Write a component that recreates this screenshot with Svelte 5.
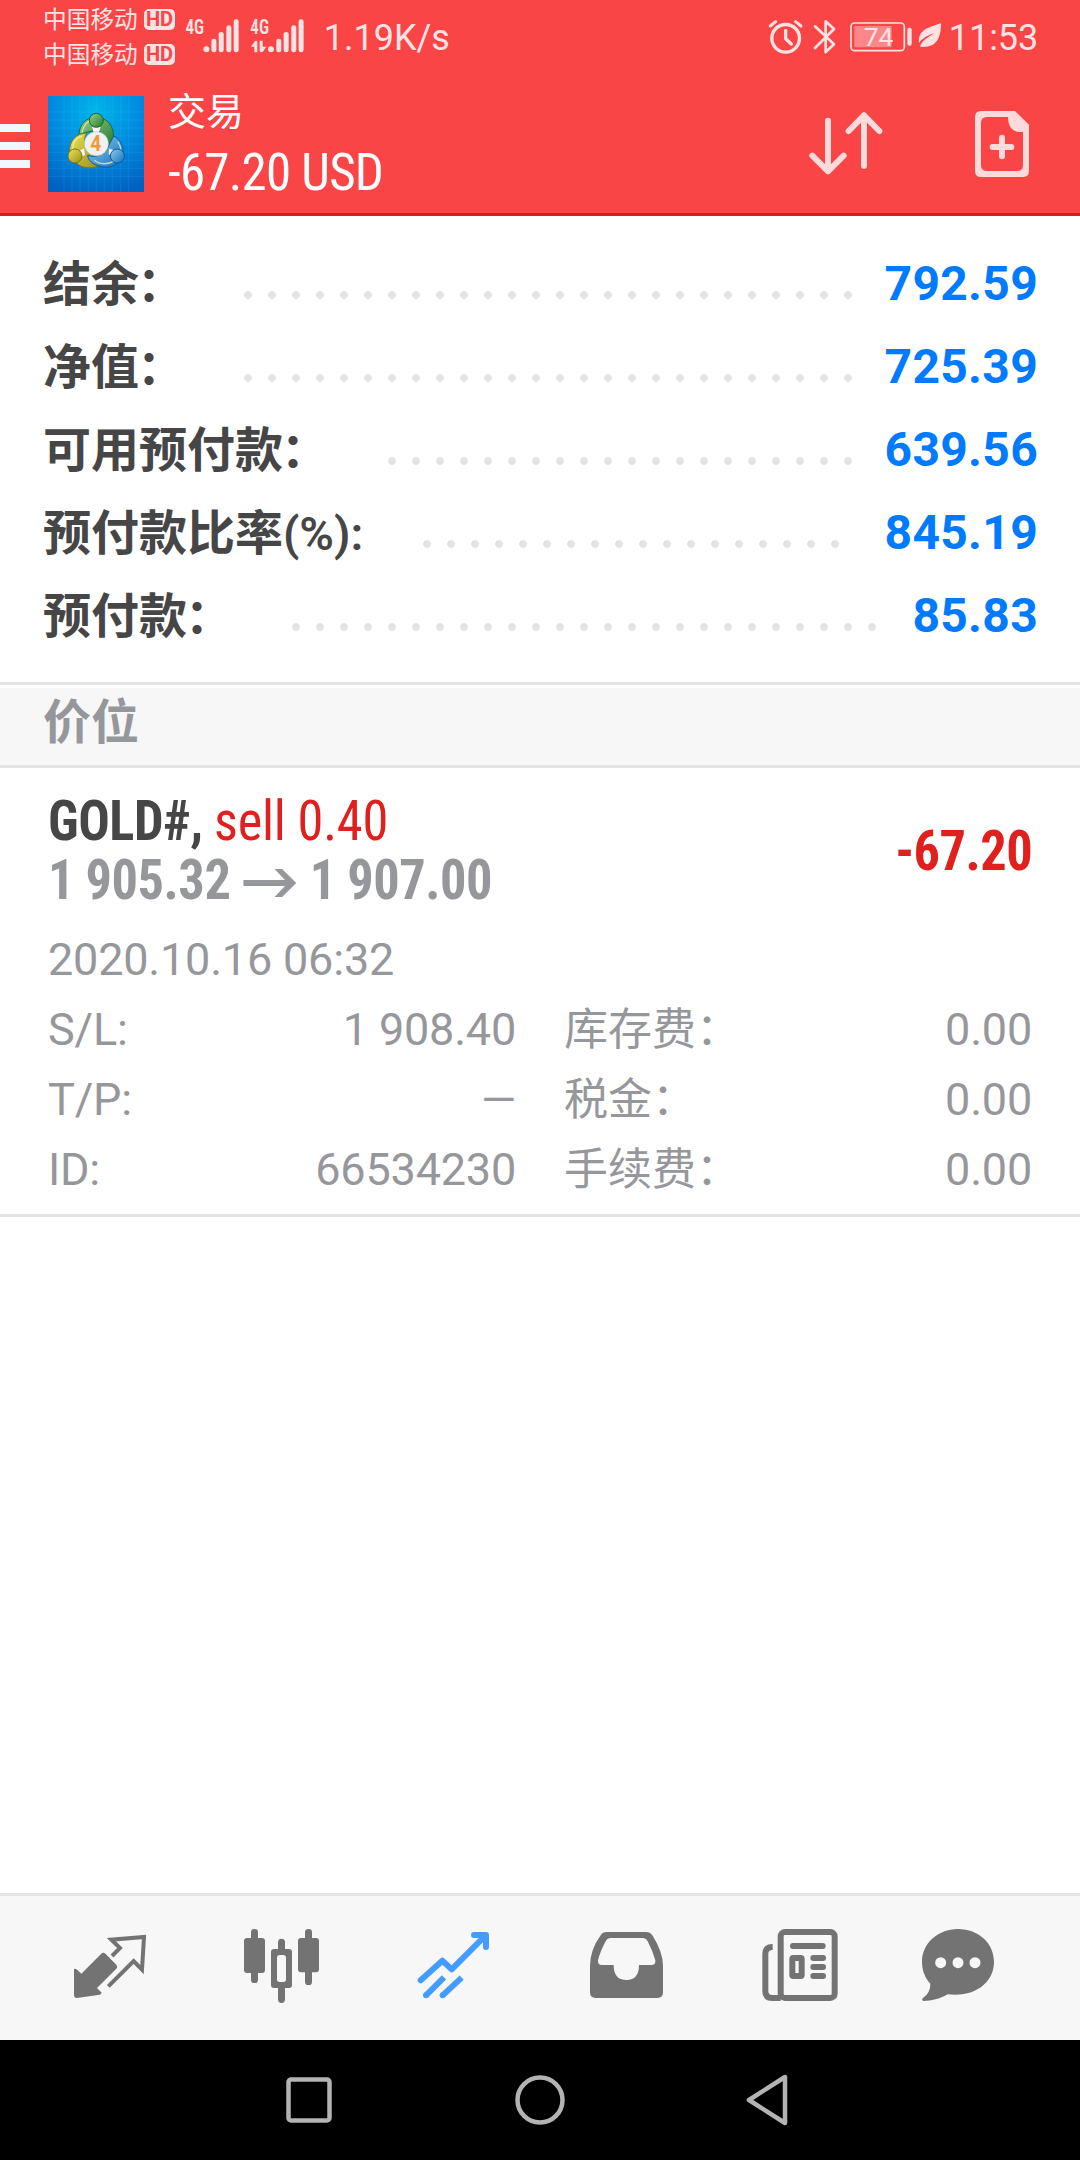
<script>
  const summary = [
    { label: '结余', value: '792.59', dots: 26, gap: 25 },
    { label: '净值', value: '725.39', dots: 26, gap: 25 },
    { label: '可用预付款', value: '639.56', dots: 20, gap: 25 },
    { label: '预付款比率', suffix: '(%):', value: '845.19', dots: 18, gap: 38 },
    { label: '预付款', value: '85.83', dots: 25, gap: 28 }
  ];

  const details = [
    { k1: 'S/L:', v1: '1 908.40', k2: '库存费：', v2: '0.00' },
    { k1: 'T/P:', v1: '—', k2: '税金：', v2: '0.00' },
    { k1: 'ID:', v1: '66534230', k2: '手续费：', v2: '0.00' }
  ];
</script>

<div class="screen" lang="zh-CN">
  <header>
    <div class="status">
      <div class="carriers">
        <div class="carrier"><span>中国移动</span><b>HD</b></div>
        <div class="carrier"><span>中国移动</span><b>HD</b></div>
      </div>
      <svg class="signal" viewBox="550 50 380 112" fill="currentColor">
        <text x="557" y="101" font-size="59" font-weight="600" textLength="56" lengthAdjust="spacingAndGlyphs">4G</text>
        <circle cx="620" cy="147" r="9" />
        <rect x="635" y="115" width="15" height="41" rx="7" />
        <rect x="657" y="95" width="15" height="61" rx="7" />
        <rect x="680" y="75" width="15" height="81" rx="7" />
        <rect x="702" y="57" width="15" height="99" rx="7" />
        <text x="752" y="101" font-size="59" font-weight="600" textLength="56" lengthAdjust="spacingAndGlyphs">4G</text>
        <path d="M754 139 L766 122 Q772 120 773 124 V156 H764 V139Z M780 121 H789 V139 H800 L789 155 Q781 158 780 153Z" />
        <circle cx="814" cy="147" r="9" />
        <rect x="830" y="115" width="15" height="41" rx="7" />
        <rect x="852" y="95" width="15" height="61" rx="7" />
        <rect x="875" y="75" width="15" height="81" rx="7" />
        <rect x="897" y="57" width="15" height="99" rx="7" />
      </svg>
      <span class="speed">1.19K/s</span>
      <svg class="tray" viewBox="84 50 528 120" fill="none" stroke="currentColor">
        <circle cx="137" cy="114" r="41.500" stroke-width="10" />
        <path d="M137 90 V115 L154 131" stroke-width="10" stroke-linecap="round" stroke-linejoin="round" />
        <path d="M91 77 L107 64 M183 77 L167 64" stroke-width="9" stroke-linecap="round" />
        <path d="M225 78 L282 132 L257 155 V63 L282 86 L225 143" stroke-width="8" stroke-linecap="round" stroke-linejoin="round" />
        <rect x="333" y="68" width="160" height="83" rx="11" stroke-width="5" />
        <rect x="343" y="77" width="112" height="64" rx="4" fill="currentColor" fill-opacity=".42" stroke="none" />
        <rect x="502" y="82" width="13" height="54" rx="6" fill="currentColor" stroke="none" />
        <text x="371" y="137" font-size="77" textLength="89" lengthAdjust="spacingAndGlyphs" fill="currentColor" stroke="none">74</text>
        <path d="M603 69 C603 115 588 142 546 140 L540 138 C548 119 566 109 584 99 C561 105 545 116 537 128 C533 88 566 81 603 69Z" fill="currentColor" stroke="none" />
      </svg>
      <span class="clock">11:53</span>
    </div>

    <div class="toolbar">
      <div class="burger"><i></i><i></i><i></i></div>
      <svg class="logo" viewBox="144 288 288 288">
        <defs>
          <radialGradient id="sky" cx="50%" cy="15%" r="90%"><stop offset="0" stop-color="#00b5ec" /><stop offset=".5" stop-color="#008be0" /><stop offset="1" stop-color="#0062c0" /></radialGradient>
          <linearGradient id="green" x2="1" y2="1"><stop stop-color="#9bd08b" /><stop offset="1" stop-color="#1f7a2c" /></linearGradient>
          <linearGradient id="yellow" x2="1" y2="1"><stop stop-color="#ece552" /><stop offset="1" stop-color="#998f1c" /></linearGradient>
          <linearGradient id="blue" x2="1" y2="1"><stop stop-color="#8cccf4" /><stop offset="1" stop-color="#1470b4" /></linearGradient>
        </defs>
        <rect x="144" y="288" width="288" height="288" fill="url(#sky)" />
        <path d="M192 288V576M216 288V576M240 288V576M265 288V576M289 288V576M313 288V576M337 288V576M362 288V576M386 288V576M144 336H432M144 360H432M144 384H432M144 408H432M144 432H432M144 457H432M144 481H432M144 505H432M144 529H432" stroke="#5fc7ff" stroke-opacity=".2" stroke-width="2" />
        <path d="M237 404 C237 374 258 352 289 352 C323 352 343 381 340 412 C337 427 328 438 319 441 C323 415 308 392 288 392 C269 392 251 400 237 404Z" fill="url(#green)" stroke="#1b6b36" stroke-width="3" />
        <path d="M209 455 C207 423 228 400 260 399 C248 420 252 451 276 464 C287 479 299 492 294 499 C270 508 237 504 226 484Z" fill="url(#yellow)" stroke="#77751f" stroke-width="3" />
        <path d="M341 408 C363 420 373 440 368 468 C360 493 327 508 300 499 C278 494 264 480 263 466 C287 475 319 463 326 437Z" fill="url(#blue)" stroke="#0b5c9f" stroke-width="3" />
        <path d="M246 397 C250 375 264 362 279 360 M218 446 C219 425 231 412 246 408 M283 481 C299 495 326 494 342 482 M353 425 C361 436 364 446 362 458" fill="none" stroke="#f3f7cf" stroke-opacity=".7" stroke-width="4" />
        <path d="M276 381 H302 L296 400 H282Z M237 454 L252 445 L255 465 L243 470Z M341 450 L327 446 L326 463 L337 470Z" fill="#f4f8f2" />
        <circle cx="289" cy="361" r="21" fill="url(#green)" stroke="#17642e" stroke-width="3" />
        <circle cx="225" cy="468" r="21" fill="url(#yellow)" stroke="#79731d" stroke-width="3" />
        <circle cx="352" cy="468" r="21" fill="url(#blue)" stroke="#0b5c9f" stroke-width="3" />
        <circle cx="289" cy="431" r="36" fill="#f1f1f1" stroke="#cbcbcb" stroke-width="2" />
        <text x="271" y="453" font-size="64" font-weight="700" fill="#f09a35" textLength="33" lengthAdjust="spacingAndGlyphs">4</text>
      </svg>
      <div class="titles">
        <div class="title">交易</div>
        <div class="total">-67.20 USD</div>
      </div>
      <svg class="action" viewBox="180 312 270 240" fill="none" stroke="currentColor" stroke-width="18" stroke-linecap="round" stroke-linejoin="round">
        <path d="M264 362 V514 M217 467 L264 514 L311 467 M372 498 V346 M326 393 L372 346 L418 393" />
      </svg>
      <svg class="action doc" viewBox="660 312 270 240" fill="currentColor">
        <path fill-rule="evenodd" d="M723 333 H825 L867 374 V513 Q867 531 849 531 H723 Q705 531 705 513 V351 Q705 333 723 333Z M741 351 Q723 351 723 369 V495 Q723 513 741 513 H831 Q849 513 849 495 V396 H836 Q804 391 804 351Z" />
        <path d="M786 413 V469 M758 441 H814" stroke="currentColor" stroke-width="18" stroke-linecap="round" />
      </svg>
    </div>
  </header>

  <section class="summary">
    {#each summary as row}
      <div class="line">
        <span class="label">{row.label}{#if row.suffix}<span class="suffix">{row.suffix}</span>{:else}<span class="colon">：</span>{/if}</span>
        <span class="leader" style="width:{row.dots * 24}px;margin-right:{row.gap}px"></span>
        <span class="value">{row.value}</span>
      </div>
    {/each}
  </section>

  <div class="section-title">价位</div>

  <section class="position">
    <div class="head">
      <div>
        <div class="deal"><b>GOLD#,</b><span>sell 0.40</span></div>
        <div class="prices">
          <span>1 905.32</span>
          <svg viewBox="0 0 56 28" fill="none" stroke="currentColor" stroke-width="6"><path d="M0 14 H51" /><path d="M33 0 H41 L56 14 L41 28 H33 L47 14Z" fill="currentColor" stroke="none" /></svg>
          <span>1 907.00</span>
        </div>
      </div>
      <div class="profit">-67.20</div>
    </div>
    <div class="date">2020.10.16 06:32</div>
    {#each details as d}
      <div class="detail">
        <span>{d.k1}</span><span class="num">{d.v1}</span><span class="cjk">{d.k2}</span><span class="num">{d.v2}</span>
      </div>
    {/each}
  </section>

  <nav class="tabs">
    <svg viewBox="66 120 288 288" fill="#737373">
      <path d="M183 222 Q190 215 197 222 L229 254 Q234 260 229 266 L171 324 L185 338 Q184 343 179 344 L111 354 Q102 354 102 345 V267 Q107 265 111 269 L124 281Z" />
      <path d="M216 228 L240 204 L214 179 L312 171 L306 269 L281 243 L205 319" fill="none" stroke="#737373" stroke-width="12" />
    </svg>
    <svg viewBox="582 120 288 288" fill="#737373">
      <rect x="633" y="147" width="21" height="162" rx="10" /><rect x="612" y="174" width="63" height="105" rx="9" />
      <rect x="795" y="147" width="21" height="168" rx="10" /><rect x="774" y="174" width="63" height="103" rx="9" />
      <path d="M714 207 V187 Q714 176 724.500 176 Q735 176 735 187 V207 H747 Q756 207 756 216 V315 Q756 324 747 324 H735 V358 Q735 369 724.500 369 Q714 369 714 358 V324 H702 Q693 324 693 315 V216 Q693 207 702 207Z" />
      <rect x="711" y="225" width="27" height="81" rx="8" fill="#f7f7f7" />
    </svg>
    <svg viewBox="1098 120 288 288" fill="none" stroke="#439dff" stroke-width="18" stroke-linejoin="round">
      <path d="M1142 301 L1207 242 L1235 268 L1336 167 M1302 165 H1338 V201" stroke-linecap="round" />
      <path d="M1158 346 L1212 292 M1208 346 L1265 293" />
      <g fill="#439dff" stroke="none"><circle cx="1158" cy="346" r="9" /><circle cx="1208" cy="346" r="9" /></g>
    </svg>
    <svg viewBox="114 120 288 288" fill="#737373">
      <path fill-rule="evenodd" d="M200 156 H318 Q330 156 337 166 Q369 216 369 258 V337 Q369 354 352 354 H167 Q150 354 150 337 V258 Q150 210 182 166 Q188 156 200 156Z M213 174 Q202 174 197 184 Q180 216 174 241 Q172 255 186 255 H221 Q221 300 259 300 Q297 300 297 255 H334 Q348 255 346 241 Q338 213 323 184 Q318 174 307 174Z" />
    </svg>
    <svg viewBox="630 120 288 288" fill="none" stroke="#737373" stroke-width="18">
      <rect x="722" y="156" width="162" height="198" rx="13" />
      <path d="M698 201 Q676 201 676 221 V333 Q676 354 697 354 H722" />
      <path d="M759 198 H848 M820 234 H849 M820 261 H849 M820 288 H849" stroke-linecap="round" />
      <rect x="757" y="234" width="28" height="54" rx="3" />
    </svg>
    <svg viewBox="1146 120 288 288" fill="#737373">
      <path d="M1254 147 C1316 147 1362 190 1362 246 C1362 305 1308 353 1223 343 C1198 357 1175 363 1149 363 Q1144 359 1148 355 Q1172 338 1171 311 C1155 294 1146 270 1146 246 C1146 190 1194 147 1254 147Z" />
      <g fill="#f7f7f7"><circle cx="1202" cy="248" r="16.500" /><circle cx="1254" cy="248" r="16.500" /><circle cx="1305" cy="248" r="16.500" /></g>
    </svg>
  </nav>

  <nav class="system">
    <svg viewBox="0 0 56 56"><rect x="7.500" y="7.500" width="41" height="41" rx="2.500" /></svg>
    <svg viewBox="0 0 56 56"><circle cx="28" cy="28" r="22.500" /></svg>
    <svg viewBox="0 0 56 56"><path d="M6 28 L42 5 V51Z" /></svg>
  </nav>
</div>

<style>
  :global(body) { background: #fff; }
  .screen {
    width: 1080px; height: 2160px; display: flex; flex-direction: column; overflow: hidden;
    font-family: Roboto, "Noto Sans CJK SC", sans-serif; background: #fff; color: #96979b;
  }
  svg { display: block; flex: none; overflow: visible; }
  header { background: #fa4547; border-bottom: 3px solid #d42020; color: #fff; }
  .status { height: 75px; display: flex; align-items: flex-start; color: #ffe3e3; font-size: 36px; line-height: 76px; }
  .carriers { margin: 2px 0 0 43px; width: 140px; }
  .carrier { display: flex; align-items: center; height: 35px; font-size: 23.7px; line-height: 33px; }
  .carrier span { width: 101px; padding-top: 2px; }
  .carrier b { width: 31px; height: 21px; border-radius: 5px; background: #ffe3e3; color: #fa4547; font-size: 20px; line-height: 21px; font-weight: 700; text-align: center; }
  .signal { width: 126.700px; height: 37.300px; margin-top: 16.700px; font-stretch: 75%; }
  .speed { margin-left: 14px; width: 444px; }
  .tray { width: 176px; height: 40px; margin-top: 16.700px; }
  .clock { margin-left: 5px; }
  .toolbar { height: 138px; display: flex; align-items: center; }
  .burger { width: 30px; display: grid; gap: 10px; margin: 4px 18px 0 0; }
  .burger i { height: 8px; background: #f0f8ff; }
  .logo { width: 96px; height: 96px; }
  .titles { margin: -3px 0 0 24px; width: 632px; }
  .title { font-size: 38px; line-height: 58px; padding-bottom: 2px; }
  .total { font-size: 51px; line-height: 60px; font-stretch: 75%; letter-spacing: -.75px; }
  .action { width: 90px; height: 80px; color: #ffdada; }
  .doc { margin-left: 70px; }

  .summary { padding: 26px 42px 25px 43px; }
  .line { display: flex; height: 83px; font-size: 48px; line-height: 83px; font-weight: 700; }
  .label { color: #464646; flex: 1; white-space: nowrap; line-height: 80px; padding-top: 3px; }
  .colon { margin-left: -2px; }
  .suffix { font-size: 47px; line-height: 1; font-weight: 600; }
  .leader { height: 12px; margin-top: 47px; background: radial-gradient(circle, #e4e4e4 3.500px, transparent 4.200px) 0 0 / 24px 12px; }
  .value { color: #007aff; letter-spacing: .3px; }
  .section-title {
    height: 76px; border-top: 3px solid #e4e4e4; border-bottom: 3px solid #e4e4e4; padding: 4px 43px 0;
    background: linear-gradient(#fff 3px, #f7f7f7 3px); font-size: 48px; line-height: 67px; font-weight: 700;
  }
  .position { padding: 24px 48px 0; height: 422px; border-bottom: 3px solid #e4e4e4; font-size: 45px; letter-spacing: -.2px; }
  .head { display: flex; justify-content: space-between; align-items: center; font-size: 55.500px; line-height: 59px; font-stretch: 75%; letter-spacing: -.5px; }
  .deal, .prices { transform: scaleX(.944); transform-origin: left; }
  .deal b { color: #464646; }
  .deal span { margin-left: 12px; letter-spacing: -.2px; }
  .deal span, .profit { color: #e01f1f; }
  .prices { display: flex; align-items: center; font-weight: 700; }
  .prices svg { width: 56px; height: 28px; margin: 4px 14px 0; }
  .profit { font-weight: 700; transform: scaleX(.944); transform-origin: right; }
  .date { line-height: 70px; margin-top: 15px; }
  .detail { display: grid; grid-template-columns: 200px 268px 49px 1fr; line-height: 70px; }
  .num { text-align: right; }
  .cjk { margin-left: 48px; font-size: 44px; letter-spacing: 0; white-space: nowrap; }

  .tabs { margin-top: auto; height: 144px; border-top: 3px solid #e4e4e4; background: #f7f7f7; padding: 0 24px; display: grid; grid-template-columns: repeat(6, 172px); place-items: center; }
  .tabs svg { width: 96px; height: 96px; }
  .system { height: 120px; background: #000; display: flex; justify-content: center; align-items: center; gap: 175px; }
  .system svg { width: 56px; height: 56px; fill: none; stroke: #b3b3b3; stroke-width: 4.500; stroke-linejoin: round; }
</style>
